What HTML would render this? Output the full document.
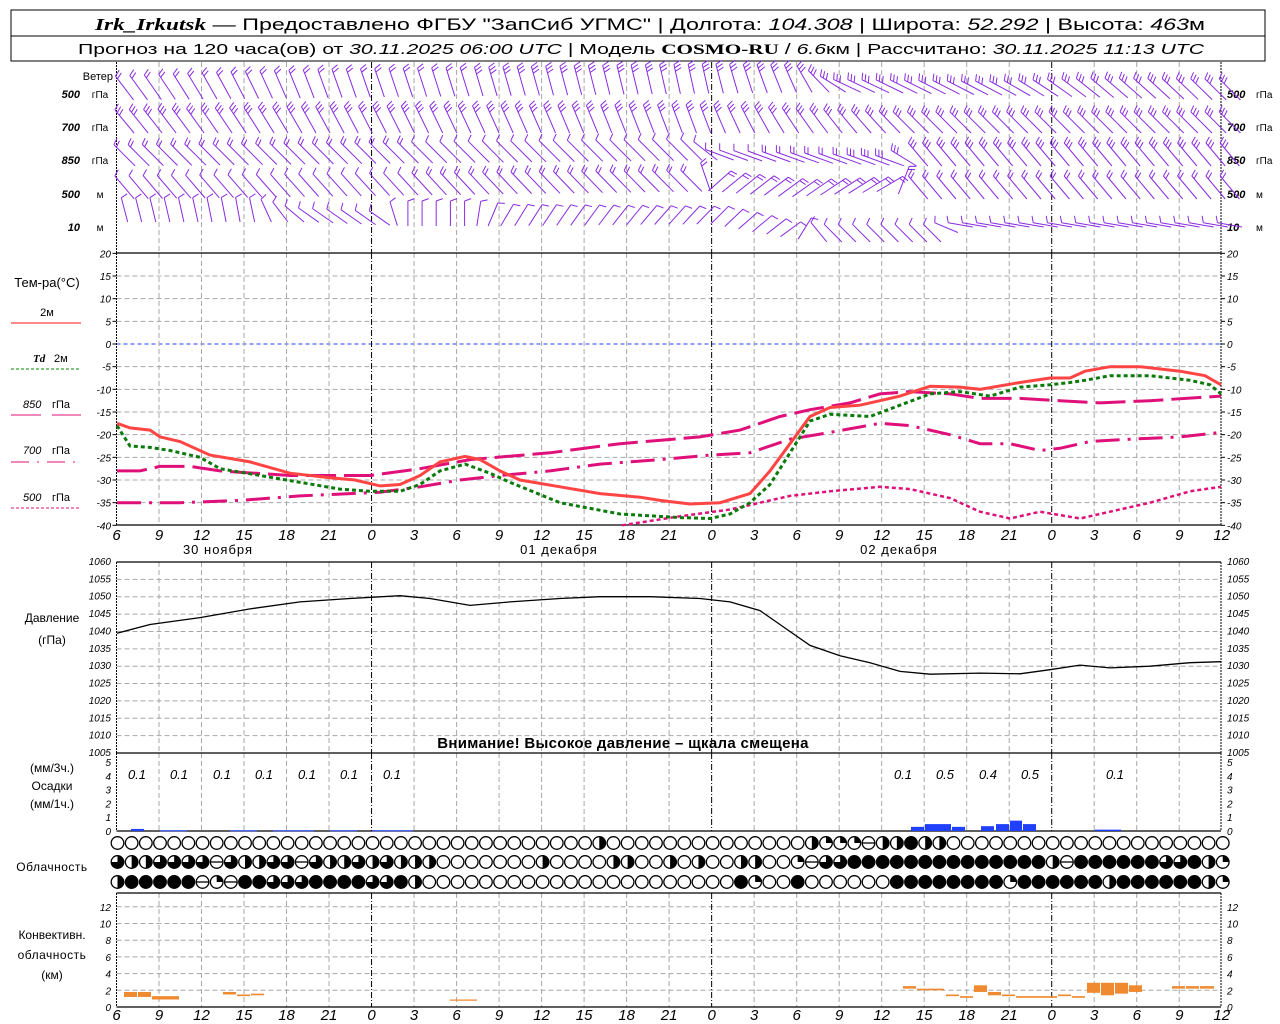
<!DOCTYPE html>
<html><head><meta charset="utf-8">
<style>
html,body{margin:0;padding:0;background:#fff;}
svg{display:block;font-family:"Liberation Sans",sans-serif;}
.ax{font-style:italic;font-size:10px;fill:#000}
.tl{font-style:italic;font-size:15px;fill:#000}
</style></head>
<body>
<svg id="s" width="1280" height="1024" xmlns="http://www.w3.org/2000/svg">
<rect x="11" y="10" width="1254" height="51" fill="#fff" stroke="#000" stroke-width="1"/>
<line x1="11" y1="36" x2="1265" y2="36" stroke="#000"/>
<text x="95" y="30" font-size="17" textLength="1110" lengthAdjust="spacingAndGlyphs"><tspan font-family="Liberation Serif" font-style="italic" font-weight="bold">Irk_Irkutsk</tspan> — Предоставлено ФГБУ "ЗапСиб УГМС" | Долгота: <tspan font-style="italic">104.308</tspan> | Широта: <tspan font-style="italic">52.292</tspan> | Высота: <tspan font-style="italic">463</tspan>м</text>
<text x="78" y="54" font-size="15" textLength="1126" lengthAdjust="spacingAndGlyphs">Прогноз на 120 часа(ов) от <tspan font-style="italic">30.11.2025 06:00 UTC</tspan>  | Модель <tspan font-family="Liberation Serif" font-weight="bold">COSMO-RU</tspan> / <tspan font-style="italic">6.6</tspan>км | Рассчитано: <tspan font-style="italic">30.11.2025 11:13 UTC</tspan></text>
<g id="g"></g>
</svg>
<script>
var g=document.getElementById('g'),NS='http://www.w3.org/2000/svg';
function el(t,a,txt){var e=document.createElementNS(NS,t);for(var k in a)e.setAttribute(k,a[k]);if(txt!=null)e.textContent=txt;g.appendChild(e);return e;}
var X0=116.5,PX=14.17;
function hx(h){return X0+h*PX;}
var L=116.5,R=1221;
function hgrid(y){el('line',{x1:L,y1:y,x2:R,y2:y,stroke:'#a8a8a8','stroke-dasharray':'5,3'});}
function ty(t){return 344-t*4.533;}
for(var t=15;t>=-35;t-=5){ if(t==0)continue; hgrid(ty(t)); }
el('line',{x1:L,y1:ty(0),x2:R,y2:ty(0),stroke:'#2040ff','stroke-dasharray':'4,3'});
function py(p){return 562+(1060-p)*3.473;}
for(var p=1055;p>=1010;p-=5)hgrid(py(p));
function cy(k){return 1007-k*8.35;}
for(var k=2;k<=12;k+=2)hgrid(cy(k));
var panels=[[62,253],[253,525],[562,753],[753,831],[893,1007]];
for(var h=3;h<78;h+=3){var x=hx(h);var day=((h+6)%24==0);
 panels.forEach(function(pp){el('line',{x1:x,y1:pp[0],x2:x,y2:pp[1],stroke:day?'#000':'#a8a8a8','stroke-dasharray':day?'6,2,1,2':'5,3'});});}
[L,R].forEach(function(x){panels.forEach(function(pp){el('line',{x1:x,y1:pp[0],x2:x,y2:pp[1],stroke:'#000','stroke-dasharray':'2,1'});});});
[253,525,562,753,831,893,1007].forEach(function(y){el('line',{x1:L,y1:y,x2:R,y2:y,stroke:'#000','stroke-width':1.2});});
function lab(x,y,s,anchor){el('text',{x:x,y:y,'class':'ax','text-anchor':anchor||'start'},s);}
for(var t=20;t>=-40;t-=5){var y=ty(t)+4;lab(111,y,''+t,'end');lab(1227,y,''+t);el('line',{x1:L-4,y1:ty(t),x2:L,y2:ty(t),stroke:'#000'});el('line',{x1:R,y1:ty(t),x2:R+4,y2:ty(t),stroke:'#000'});}
for(var p=1060;p>=1005;p-=5){var y=py(p)+3;lab(111,y,''+p,'end');lab(1227,y,''+p);}
for(var k=0;k<=5;k++){var y=831-k*13.8+4;lab(111,y,''+k,'end');lab(1227,y,''+k);}
for(var k=0;k<=12;k+=2){var y=cy(k)+4;lab(111,y,''+k,'end');lab(1227,y,''+k);}
for(var h=0;h<=78;h+=3){var v=(h+6)%24;el('text',{x:hx(h),y:540,'class':'tl','text-anchor':'middle'},''+v);el('text',{x:hx(h),y:1020,'class':'tl','text-anchor':'middle'},''+v);}
el('text',{x:218,y:554,'font-size':13,'text-anchor':'middle','letter-spacing':'1'},'30 ноября');
el('text',{x:559,y:554,'font-size':13,'text-anchor':'middle','letter-spacing':'1'},'01 декабря');
el('text',{x:899,y:554,'font-size':13,'text-anchor':'middle','letter-spacing':'1'},'02 декабря');
el('text',{x:113,y:80,'font-size':11,'text-anchor':'end'},'Ветер');
var wl=[['500','гПа',98],['700','гПа',131],['850','гПа',164],['500','м',198],['10','м',231]];
wl.forEach(function(w){el('text',{x:80,y:w[2],'font-size':11,'font-style':'italic','font-weight':'bold','text-anchor':'end'},w[0]);el('text',{x:100,y:w[2],'font-size':10,'text-anchor':'middle'},w[1]);
 el('text',{x:1227,y:w[2],'font-size':11,'font-style':'italic','font-weight':'bold'},w[0]);el('text',{x:1256,y:w[2],'font-size':10},w[1]);});
el('text',{x:47,y:287,'font-size':13,'text-anchor':'middle'},'Тем-ра(°С)');
el('text',{x:47,y:316,'font-size':11,'text-anchor':'middle'},'2м');
el('line',{x1:11,y1:323,x2:81,y2:323,stroke:'#f44',"stroke-width":1.3});
el('text',{x:33,y:362,'font-size':11,'font-style':'italic','font-weight':'bold','font-family':'Liberation Serif'},'Td');el('text',{x:54,y:362,'font-size':11},'2м');
el('line',{x1:11,y1:369,x2:79,y2:369,stroke:'#080','stroke-dasharray':'3,2'});
el('text',{x:23,y:408,'font-size':11,'font-style':'italic'},'850');el('text',{x:52,y:408,'font-size':11},'гПа');
el('line',{x1:11,y1:415,x2:41,y2:415,stroke:'#e0107a'});el('line',{x1:52,y1:415,x2:81,y2:415,stroke:'#e0107a'});
el('text',{x:23,y:454,'font-size':11,'font-style':'italic'},'700');el('text',{x:52,y:454,'font-size':11},'гПа');
el('line',{x1:11,y1:462,x2:81,y2:462,stroke:'#e0107a','stroke-dasharray':'18,8,2,8'});
el('text',{x:23,y:501,'font-size':11,'font-style':'italic'},'500');el('text',{x:52,y:501,'font-size':11},'гПа');
el('line',{x1:11,y1:508,x2:79,y2:508,stroke:'#e0107a','stroke-dasharray':'3,2'});
el('text',{x:52,y:622,'font-size':12,'text-anchor':'middle'},'Давление');
el('text',{x:52,y:644,'font-size':12,'text-anchor':'middle'},'(гПа)');
el('text',{x:52,y:772,'font-size':12,'text-anchor':'middle'},'(мм/3ч.)');
el('text',{x:52,y:790,'font-size':12,'text-anchor':'middle'},'Осадки');
el('text',{x:52,y:808,'font-size':12,'text-anchor':'middle'},'(мм/1ч.)');
el('text',{x:52,y:871,'font-size':12,'text-anchor':'middle','letter-spacing':'0.5'},'Облачность');
el('text',{x:52,y:939,'font-size':12,'text-anchor':'middle'},'Конвективн.');
el('text',{x:52,y:959,'font-size':12,'text-anchor':'middle','letter-spacing':'0.5'},'облачность');
el('text',{x:52,y:979,'font-size':12,'text-anchor':'middle'},'(км)');
el('text',{x:623,y:748,'font-size':15,'font-weight':'bold','text-anchor':'middle','letter-spacing':'0.3'},'Внимание! Высокое давление – щкала смещена');
function path(pts,yf,attrs){var d='';pts.forEach(function(p,i){d+=(i?'L':'M')+p[0]+','+yf(p[1]).toFixed(1);});attrs.d=d;attrs.fill='none';el('path',attrs);}
var t850=[[117,-28],[140,-28],[160,-27],[190,-27],[220,-28],[290,-29],[330,-29],[370,-29],[420,-27.5],[470,-25.5],[550,-24],[620,-22],[700,-20.5],[740,-19],[780,-16],[810,-14.5],[850,-13],[880,-11],[910,-10.5],[950,-11],[980,-12],[1020,-12],[1060,-12.5],[1100,-13],[1150,-12.5],[1221,-11.5]];
var t700=[[117,-35],[180,-35],[240,-34.5],[300,-33.5],[350,-33],[380,-32.7],[420,-31.5],[460,-30],[500,-29],[550,-28],[600,-26.5],[660,-25.5],[710,-24.5],[750,-24],[790,-21],[830,-19.5],[880,-17.5],[910,-18],[950,-20],[980,-22],[1010,-22],[1040,-23.5],[1060,-23],[1090,-21.5],[1130,-21],[1180,-20.5],[1221,-19.5]];
var t500=[[622,-40],[680,-38],[730,-36.5],[790,-33.5],[830,-32.5],[880,-31.5],[910,-32],[950,-34],[980,-37],[1010,-38.5],[1040,-37],[1080,-38.5],[1110,-37],[1150,-35],[1190,-32.5],[1221,-31.5]];
var td=[[117,-18],[130,-22.5],[150,-22.8],[170,-23.5],[200,-25],[220,-27.5],[260,-29],[300,-30.5],[340,-32],[370,-32.5],[400,-32.5],[420,-31],[440,-28],[465,-26.5],[490,-28.5],[510,-30.5],[560,-35],[620,-37.5],[680,-38.3],[710,-38.5],[730,-37.5],[750,-35],[770,-31],[790,-24],[810,-17],[830,-15.5],[870,-16],[900,-13.5],[930,-11],[960,-10.5],[990,-11.5],[1020,-9.5],[1050,-9],[1070,-8.5],[1085,-8],[1110,-7],[1150,-7],[1190,-8],[1210,-9],[1221,-11]];
var t2=[[117,-17.5],[130,-18.5],[150,-19],[160,-20.5],[180,-21.5],[210,-24.5],[250,-26],[290,-28.5],[330,-29.5],[355,-30],[380,-31.3],[400,-31],[420,-29],[440,-26],[465,-24.8],[480,-25.5],[500,-28],[520,-30],[560,-31.5],[600,-33],[640,-33.8],[660,-34.5],[690,-35.3],[720,-35],[750,-33],[770,-28],[790,-22],[810,-16],[830,-14],[860,-13.5],[900,-11.5],[930,-9.3],[960,-9.5],[980,-10],[1020,-8.5],[1050,-7.5],[1070,-7.5],[1085,-6],[1110,-5],[1140,-5],[1180,-6],[1205,-7],[1221,-9]];
path(t850,ty,{stroke:'#e0107a','stroke-width':3,'stroke-dasharray':'30,8'});
path(t700,ty,{stroke:'#e0107a','stroke-width':3,'stroke-dasharray':'24,8,3,8'});
path(t500,ty,{stroke:'#e0107a','stroke-width':2.5,'stroke-dasharray':'4,3'});
path(td,ty,{stroke:'#0a7a0a','stroke-width':3,'stroke-dasharray':'4,3'});
path(t2,ty,{stroke:'#f44','stroke-width':3});
var pr=[[117,1039.5],[150,1042],[200,1044],[250,1046.5],[300,1048.5],[350,1049.5],[400,1050.3],[430,1049.5],[470,1047.5],[510,1048.5],[560,1049.5],[600,1050],[650,1050],[700,1049.5],[730,1048.5],[760,1046],[790,1040],[810,1036],[840,1033],[870,1031],[900,1028.5],[930,1027.7],[980,1028],[1020,1027.8],[1050,1029],[1080,1030.3],[1110,1029.5],[1150,1030],[1190,1031],[1221,1031.3]];
path(pr,py,{stroke:'#000','stroke-width':1.3});
function bar(x1,x2,v,col,yf){el('rect',{x:x1,y:yf(v),width:x2-x1-1,height:Math.max(1,yf(0)-yf(v)),fill:col});}
var pry=function(v){return 831-v*13.8;};
[[131,145,0.15],[160,188,0.05],[230,258,0.05],[273,315,0.05],[330,358,0.05],[372,414,0.05],[911,925,0.3],[925,952,0.5],[952,966,0.3],[981,995,0.35],[996,1010,0.5],[1010,1023,0.75],[1023,1037,0.5],[1095,1122,0.1]].forEach(function(b){bar(b[0],b[1],b[2],'#2040ff',pry);});
[[137,'0.1'],[179,'0.1'],[222,'0.1'],[264,'0.1'],[307,'0.1'],[349,'0.1'],[392,'0.1'],[903,'0.1'],[945,'0.5'],[988,'0.4'],[1030,'0.5'],[1115,'0.1']].forEach(function(a){el('text',{x:a[0],y:779,'font-size':13,'font-style':'italic','text-anchor':'middle'},a[1]);});
[[124,138,1.8,1.2],[138,152,1.8,1.2],[152,180,1.3,0.9],[223,237,1.8,1.5],[237,251,1.5,1.3],[251,265,1.6,1.4],[450,478,0.9,0.75],[903,917,2.5,2.2],[917,945,2.2,2.0],[946,960,1.5,1.3],[960,974,1.3,1.1],[974,988,2.6,1.8],[988,1002,1.8,1.4],[1002,1016,1.5,1.3],[1016,1058,1.3,1.1],[1058,1072,1.5,1.3],[1072,1086,1.3,1.1],[1087,1101,2.9,1.7],[1101,1115,2.9,1.4],[1115,1129,2.9,1.6],[1129,1143,2.6,1.8],[1172,1186,2.5,2.2],[1186,1200,2.5,2.2],[1200,1215,2.5,2.2]].forEach(function(b){el('rect',{x:b[0],y:cy(b[2]),width:b[1]-b[0]-1,height:cy(b[3])-cy(b[2]),fill:'#f08a30'});});
function rep(c,n){return new Array(n+1).join(c);}
var rows=[
 rep('0',34)+'h'+rep('0',14)+'hqqqthh4hh'+rep('0',20),
 '3hh3333t3hh33t3hh3h3hh'+'h0000000h0000hh00h0h00hh00'+'qt33'+rep('4',14)+'ht'+rep('4',6)+'334hq',
 'h44444tqt443334444334h'+rep('0',22)+'4q004'+rep('0',6)+rep('4',8)+'q'+rep('4',6)+'h'+rep('4',6)+'hq'];
var cys=[843,862,882];
function glyph(cx,cy,c){var r=6.3;
 el('circle',{cx:cx,cy:cy,r:r,fill:c=='4'?'#000':'#fff',stroke:'#000','stroke-width':1.3});
 if(c=='h')el('path',{d:'M'+cx+','+(cy-r)+'A'+r+','+r+' 0 0 1 '+cx+','+(cy+r)+'Z',fill:'#000'});
 if(c=='3')el('path',{d:'M'+cx+','+cy+'L'+cx+','+(cy-r)+'A'+r+','+r+' 0 1 1 '+(cx-r)+','+cy+'Z',fill:'#000'});
 if(c=='q')el('path',{d:'M'+cx+','+cy+'L'+cx+','+(cy-r)+'A'+r+','+r+' 0 0 1 '+(cx+r)+','+cy+'Z',fill:'#000'});
 if(c=='t')el('line',{x1:cx-r,y1:cy,x2:cx+r,y2:cy,stroke:'#000','stroke-width':1.3});
}
rows.forEach(function(s,ri){for(var i=0;i<79;i++){glyph(hx(i)+1,cys[ri],s.charAt(i)||'0');}});
function interp(arr,x){if(x<=arr[0][0])return arr[0][1];for(var i=1;i<arr.length;i++){if(x<=arr[i][0]){var a=arr[i-1],b=arr[i];return a[1]+(b[1]-a[1])*(x-a[0])/(b[0]-a[0]);}}return arr[arr.length-1][1];}
var W=[
 {yb:100,L:30,ang:[[117,38],[320,20],[700,12],[800,25],[840,65],[1000,62],[1100,50],[1221,45]],nf:[[117,2],[840,3],[1221,3]],dy:[[117,0],[840,-8],[1221,0]]},
 {yb:133,L:30,ang:[[117,40],[330,28],[700,20],[800,35],[900,45],[1221,45]],nf:[[117,3],[1221,3]],dy:[[117,0]]},
 {yb:166,L:30,ang:[[117,45],[700,45],[720,70],[900,70],[910,40],[1221,40]],nf:[[117,2],[720,1],[900,3],[1221,3]],dy:[[117,0],[720,-6],[900,0]]},
 {yb:199,L:30,ang:[[117,40],[700,45],[720,-50],[900,-60],[910,40],[1221,40]],nf:[[117,1],[700,2],[1221,2]],dy:[[117,0],[720,-8],[800,-2],[900,-8],[910,0]]},
 {yb:232,L:25,ang:[[117,15],[250,10],[300,55],[380,55],[400,0],[470,0],[500,-30],[720,-45],[800,-55],[820,45],[940,45],[950,80],[1221,80]],nf:[[117,1],[1221,1]],dy:[[117,-10],[300,-10],[400,-6],[500,-6],[720,-8],[820,10],[940,10],[950,-5],[1221,-5]]}
];
for(var i=0;i<79;i++){var x=hx(i)+8;
 W.forEach(function(w){var a=interp(w.ang,x)*Math.PI/180,n=Math.round(interp(w.nf,x)),yb=w.yb+interp(w.dy,x);
  var ux=-Math.sin(a),uy=-Math.cos(a);var bx=x+Math.sin(a)*w.L*0.5, by=yb;
  var tx=bx+ux*w.L,ty2=by+uy*w.L;
  var d='M'+bx.toFixed(1)+','+by.toFixed(1)+'L'+tx.toFixed(1)+','+ty2.toFixed(1);
  var fx=Math.sin(Math.PI/180*70-a),fy=-Math.cos(Math.PI/180*70-a);
  for(var k=0;k<n;k++){var sx=tx-ux*k*3.5,sy=ty2-uy*k*3.5;d+='M'+sx.toFixed(1)+','+sy.toFixed(1)+'l'+(fx*7).toFixed(1)+','+(fy*7).toFixed(1);}
  el('path',{d:d,stroke:'#8a2be2','stroke-width':1,fill:'none'});});
}
</script>
</body></html>
